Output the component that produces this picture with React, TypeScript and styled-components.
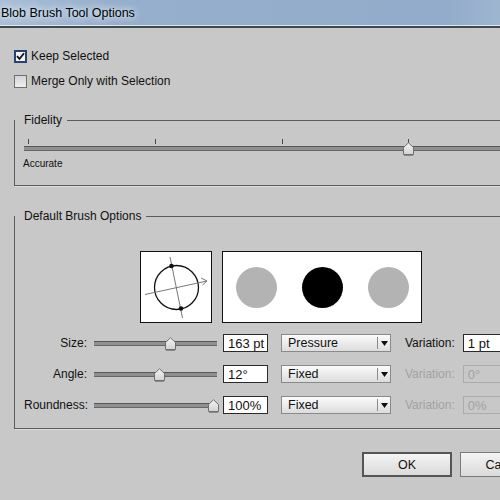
import styled, { createGlobalStyle } from "styled-components";

const GlobalStyle = createGlobalStyle`
  html, body {
    margin: 0;
    padding: 0;
    overflow: hidden;
    background: #c8c8c8;
  }
  body {
    font-family: "Liberation Sans", Arial, sans-serif;
    color: #111;
  }
`;

type SliderProps = { width: number; value: number; ticks?: number };

function Slider({ width, value, ticks = 0 }: SliderProps) {
  const inset = 4;
  const span = width - inset * 2;
  return (
    <SliderWrap $width={width} $ticked={ticks > 0}>
      {Array.from({ length: ticks }).map((_, i) => (
        <Tick key={i} style={{ left: inset + (i / (ticks - 1)) * span }} />
      ))}
      <Track />
      <Thumb style={{ left: inset + value * span - 5 }} viewBox="0 0 11 14" width="11" height="14">
        <defs>
          <linearGradient id="thumbFill" x1="0" y1="0" x2="0" y2="1">
            <stop offset="0" stopColor="#f4f4f4" />
            <stop offset="1" stopColor="#d2d2d2" />
          </linearGradient>
        </defs>
        <path d="M0.5 12.5 V5.5 L5.5 0.8 L10.5 5.5 V12.5 Z" fill="url(#thumbFill)" stroke="#6e6e6e" />
        <path d="M1 13.5 H10" stroke="#8a8a8a" />
      </Thumb>
    </SliderWrap>
  );
}

function CheckBox({ checked }: { checked?: boolean }) {
  return (
    <Box $checked={checked}>
      {checked && (
        <svg width="9" height="9" viewBox="0 0 9 9">
          <path d="M1 4.2 L3.5 6.8 L8 1.2" fill="none" stroke="#111" strokeWidth="1.8" />
        </svg>
      )}
    </Box>
  );
}

function Dropdown({ label }: { label: string }) {
  return (
    <Select>
      <SelectText>{label}</SelectText>
      <SelectDivider />
      <SelectArrow>
        <svg width="7" height="5" viewBox="0 0 7 5">
          <path d="M0 0 H7 L3.5 5 Z" fill="#111" />
        </svg>
      </SelectArrow>
    </Select>
  );
}

type RowProps = {
  label: string;
  value: number;
  amount: string;
  mode: string;
  variation: string;
  disabled?: boolean;
};

function BrushRow({ label, value, amount, mode, variation, disabled }: RowProps) {
  return (
    <Row>
      <RowLabel>{label}</RowLabel>
      <Slider width={123} value={value} />
      <Field $width={45} $gap={6}>
        {amount}
      </Field>
      <Dropdown label={mode} />
      <VariationLabel $disabled={disabled}>Variation:</VariationLabel>
      <Field $width={60} $gap={8} $disabled={disabled}>
        {variation}
      </Field>
    </Row>
  );
}

function AnglePreview() {
  return (
    <svg width="70" height="70" viewBox="0 0 70 70">
      <circle cx="35.5" cy="35.5" r="22" fill="none" stroke="#111" strokeWidth="1.3" />
      <path d="M29 5 L41.5 66" stroke="#777" strokeWidth="1" />
      <path d="M4 42.5 L66 29" stroke="#777" strokeWidth="1" />
      <path d="M60 26 L66 29 L61.5 33" fill="none" stroke="#777" strokeWidth="1" />
      <circle cx="30.5" cy="14" r="2.3" fill="#111" />
      <circle cx="40" cy="56.5" r="2.3" fill="#111" />
    </svg>
  );
}

export default function App() {
  return (
    <>
      <GlobalStyle />
      <Window>
        <TitleBar>Blob Brush Tool Options</TitleBar>
        <Body>
          <CheckRow>
            <CheckBox checked />
            <CheckLabel>Keep Selected</CheckLabel>
          </CheckRow>
          <CheckRow>
            <CheckBox />
            <CheckLabel>Merge Only with Selection</CheckLabel>
          </CheckRow>

          <Group>
            <Legend>Fidelity</Legend>
            <FidelityBody>
              <Slider width={515} value={0.75} ticks={5} />
              <SmallLabel>Accurate</SmallLabel>
            </FidelityBody>
          </Group>

          <Group $spaced>
            <Legend>Default Brush Options</Legend>
            <PreviewRow>
              <PreviewBox $width={72}>
                <AnglePreview />
              </PreviewBox>
              <PreviewBox $width={200} $spread>
                <Dot />
                <Dot $dark />
                <Dot />
              </PreviewBox>
            </PreviewRow>
            <Rows>
              <BrushRow label="Size:" value={0.63} amount="163 pt" mode="Pressure" variation="1 pt" />
              <BrushRow label="Angle:" value={0.53} amount="12°" mode="Fixed" variation="0°" disabled />
              <BrushRow label="Roundness:" value={1} amount="100%" mode="Fixed" variation="0%" disabled />
            </Rows>
          </Group>

          <ButtonRow>
            <Button $primary>OK</Button>
            <Button>Cancel</Button>
          </ButtonRow>
        </Body>
      </Window>
    </>
  );
}

const Window = styled.div`
  width: 620px;
  height: 500px;
  background: #c8c8c8;
  display: flex;
  flex-direction: column;
`;

const TitleBar = styled.div`
  height: 26px;
  display: flex;
  align-items: center;
  padding-left: 1px;
  font-size: 12.5px;
  color: #000;
  background: linear-gradient(90deg, #a9bfd7 0%, #96afcc 18%, #93accb 72%, #b8cadd 100%);
  box-shadow: inset 0 -1px 0 #dfe7ef;
  border-bottom: 2px solid #3f474f;
  text-shadow: 0 0 6px #e8f0f8, 0 0 10px #e8f0f8;
`;

const Body = styled.div`
  display: flex;
  flex-direction: column;
  padding: 20px 0 0 14px;
`;

const CheckRow = styled.label`
  display: flex;
  align-items: center;
  gap: 4px;
  height: 16px;
  font-size: 12px;
  & + & {
    margin-top: 9px;
  }
`;

const Box = styled.span<{ $checked?: boolean }>`
  box-sizing: border-box;
  width: 13px;
  height: 13px;
  display: flex;
  align-items: center;
  justify-content: center;
  border: ${(p) => (p.$checked ? "2px solid #24436f" : "1px solid #6f6f6f")};
  background: ${(p) => (p.$checked ? "#f4f4f4" : "linear-gradient(#d4d4d4, #efefef)")};
`;

const CheckLabel = styled.span`
  line-height: 16px;
`;

const Group = styled.fieldset<{ $spaced?: boolean }>`
  margin: ${(p) => (p.$spaced ? "22px" : "23px")} 0 0 0;
  padding: 0 0 14px 9px;
  width: 570px;
  min-width: 0;
  border: 1px solid #5c5c5c;
  box-shadow: 1px 1px 0 #dedede;
`;

const Legend = styled.legend`
  margin-left: -9px;
  padding: 0 5px 0 9px;
  font-size: 12px;
  line-height: 16px;
  color: #111;
`;

const FidelityBody = styled.div`
  display: flex;
  flex-direction: column;
  padding-top: 11px;
`;

const SliderWrap = styled.div<{ $width: number; $ticked: boolean }>`
  position: relative;
  flex: none;
  width: ${(p) => p.$width}px;
  height: ${(p) => (p.$ticked ? 17 : 18)}px;
  padding-top: 7px;
  box-sizing: border-box;
`;

const Tick = styled.span`
  position: absolute;
  top: 0;
  width: 1px;
  height: 5px;
  background: #4a4a4a;
`;

const Track = styled.div`
  height: 3px;
  border-top: 1px solid #575757;
  border-bottom: 1px solid #666;
  background: #8f8f8f;
`;

const Thumb = styled.svg`
  position: absolute;
  top: 3px;
`;

const SmallLabel = styled.span`
  margin: 1px 0 0 -1px;
  font-size: 10px;
  line-height: 14px;
  color: #111;
`;

const PreviewRow = styled.div`
  display: flex;
  gap: 10px;
  margin: 27px 0 0 116px;
`;

const PreviewBox = styled.div<{ $width: number; $spread?: boolean }>`
  box-sizing: border-box;
  width: ${(p) => p.$width}px;
  height: 72px;
  background: #fff;
  border: 1px solid #111;
  display: flex;
  align-items: center;
  justify-content: ${(p) => (p.$spread ? "space-around" : "center")};
`;

const Dot = styled.span<{ $dark?: boolean }>`
  width: 41px;
  height: 41px;
  border-radius: 50%;
  background: ${(p) => (p.$dark ? "#000" : "#b3b3b3")};
`;

const Rows = styled.div`
  display: flex;
  flex-direction: column;
  gap: 13px;
  margin-top: 11px;
`;

const Row = styled.div`
  display: flex;
  align-items: center;
  height: 18px;
  font-size: 12px;
`;

const RowLabel = styled.span`
  width: 63px;
  margin-right: 7px;
  text-align: right;
`;

const Field = styled.div<{ $width: number; $gap: number; $disabled?: boolean }>`
  box-sizing: border-box;
  flex: none;
  width: ${(p) => p.$width}px;
  height: 18px;
  margin-left: ${(p) => p.$gap}px;
  padding-left: 4px;
  display: flex;
  align-items: center;
  font-size: 13px;
  color: ${(p) => (p.$disabled ? "#a2a2a2" : "#111")};
  background: ${(p) => (p.$disabled ? "transparent" : "#fff")};
  border: 1px solid ${(p) => (p.$disabled ? "#acacac" : "#2a2a2a")};
`;

const Select = styled.div`
  box-sizing: border-box;
  flex: none;
  width: 110px;
  height: 18px;
  margin-left: 13px;
  display: flex;
  align-items: center;
  border: 1px solid #8a8a8a;
  background: linear-gradient(#fbfbfb, #dcdcdc);
  font-size: 12.5px;
`;

const SelectText = styled.span`
  flex: 1;
  padding-left: 6px;
`;

const SelectDivider = styled.span`
  width: 1px;
  height: 12px;
  background: #8a8a8a;
`;

const SelectArrow = styled.span`
  width: 12px;
  display: flex;
  justify-content: center;
`;

const VariationLabel = styled.span<{ $disabled?: boolean }>`
  margin-left: 14px;
  color: ${(p) => (p.$disabled ? "#a2a2a2" : "#111")};
`;

const ButtonRow = styled.div`
  display: flex;
  gap: 8px;
  margin: 23px 0 0 348px;
`;

const Button = styled.button<{ $primary?: boolean }>`
  box-sizing: border-box;
  width: 90px;
  height: 25px;
  padding: 0;
  font-family: "Liberation Sans", Arial, sans-serif;
  font-size: 12.5px;
  color: #111;
  background: linear-gradient(#f4f4f4, #dadada);
  border: ${(p) => (p.$primary ? "2px solid #555" : "1px solid #7a7a7a")};
`;
